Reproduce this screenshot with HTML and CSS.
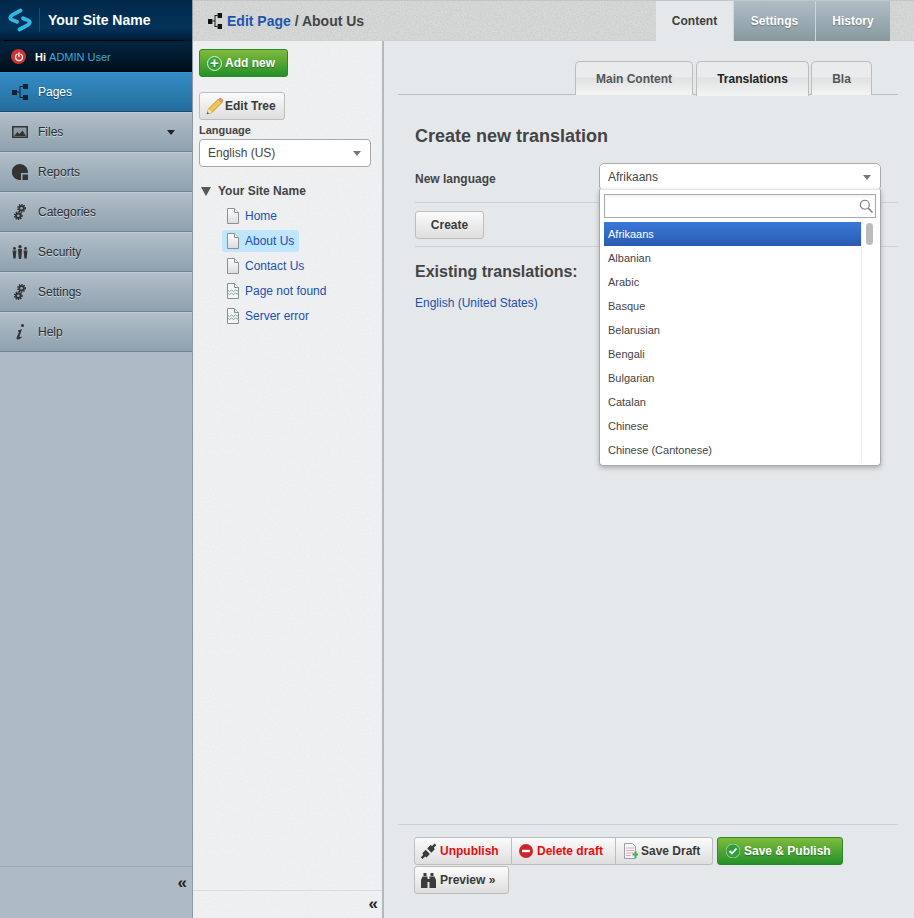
FILE: index.html
```html
<!DOCTYPE html>
<html lang="en">
<head>
<meta charset="utf-8">
<title>Edit Page / About Us</title>
<link rel="stylesheet" href="styles.css">
</head>
<body>
<svg class="defs" width="0" height="0" aria-hidden="true">
  <symbol id="i-tree" viewBox="0 0 16 16"><path d="M0 6h5v5H0zM11 0h5v5h-5zM11 11h5v5h-5z"/><path d="M5 8h3M8 2.500h3M8 13.500h3M8 2v12" fill="none" stroke="currentColor" stroke-width="1"/></symbol>
  <symbol id="i-gears" viewBox="0 0 16 16"><g fill="none" stroke="currentColor"><circle cx="9.500" cy="4.300" r="2.300" stroke-width="2"/><circle cx="9.500" cy="4.300" r="3.700" stroke-width="1.500" stroke-dasharray="1.300 1.100"/><circle cx="6.300" cy="11.700" r="2.300" stroke-width="2"/><circle cx="6.300" cy="11.700" r="3.700" stroke-width="1.500" stroke-dasharray="1.300 1.100"/></g></symbol>
  <symbol id="i-page" viewBox="0 0 14 16"><path d="M1.500.5h7l4 4v11h-11z" fill="url(#g-page)" stroke="#8b9092"/><path d="M8.500.5v4h4" fill="#fff" stroke="#8b9092"/></symbol>
  <symbol id="i-broken" viewBox="0 0 14 16"><path d="M1.500.5h7l4 4v11h-11z" fill="#f4f6f5" stroke="#82908f"/><path d="M8.500.5v4h4" fill="#fff" stroke="#82908f"/><path d="M1.500 7l2 1.500 2-1.500 2 1.500 2-1.500 3 1.500M1.500 10l2 1.500 2-1.500 2 1.500 2-1.500 3 1.500" fill="none" stroke="#8ba3a2"/></symbol>
  <linearGradient id="g-page" x1="0" y1="0" x2="0" y2="1"><stop offset="0" stop-color="#fff"/><stop offset="1" stop-color="#dcdcdc"/></linearGradient>
</svg>

<div class="app">
  <aside class="sidebar">
    <div class="brand">
      <div class="brand-top">
        <svg class="logo" width="24" height="24" viewBox="0 0 24 24" fill="none" stroke="#33b5e5" stroke-width="3.800" stroke-linecap="round" stroke-linejoin="round"><path d="M12.500 2.500 4.500 6.800C1.500 8.800 1.500 10.800 4 11.800c2 .7 3.500 1.200 5 2"/><path d="M11.500 21.500l8-4.300c3-2 3-4 .5-5-2-.7-3.500-1.200-5-2"/></svg>
        <span class="site-name">Your Site Name</span>
      </div>
      <div class="user-row">
        <span class="power"><svg width="10" height="10" viewBox="0 0 10 10" fill="none" stroke="#fff" stroke-width="1.300" stroke-linecap="round"><path d="M3 2.300a3.500 3.500 0 1 0 4 0M5 .8v3.700"/></svg></span>
        <span class="hi">Hi <a class="user" href="#">ADMIN User</a></span>
      </div>
    </div>
    <nav class="nav">
      <a class="nav-item active" href="#"><svg class="nav-icon" width="16" height="16"><use href="#i-tree"/></svg>Pages</a>
      <a class="nav-item" href="#"><svg class="nav-icon" width="16" height="12" viewBox="0 0 16 12"><path d="M0 0h16v12H0z" fill="#333"/><path d="M1.500 1.500h13v9h-13z" fill="#8f9ba3"/><path d="M2 10l3.500-4 2 2 3-3.500L14 10z" fill="#333"/></svg>Files<span class="caret"></span></a>
      <a class="nav-item" href="#"><svg class="nav-icon" width="16" height="16" viewBox="0 0 16 16" fill="#333"><path d="M8 0a8 8 0 1 0 1 15.900V9h6.900A8 8 0 0 0 8 0z"/><path d="M10.500 10.500H16V16h-5.500z"/></svg>Reports</a>
      <a class="nav-item" href="#"><svg class="nav-icon" width="16" height="16"><use href="#i-gears"/></svg>Categories</a>
      <a class="nav-item" href="#"><svg class="nav-icon" width="16" height="14" viewBox="0 0 16 14" fill="#333"><circle cx="2.500" cy="3.500" r="1.400"/><circle cx="8" cy="1.800" r="1.700"/><circle cx="13.500" cy="3.500" r="1.400"/><path d="M.5 5.500h4L4 10l-.4 3.500H1.400L1 10zM6 4h4l-.4 6.500-.5 3.500H6.900l-.5-3.500zM11.500 5.500h4L15 10l-.4 3.500h-2.200L12 10z"/></svg>Security</a>
      <a class="nav-item" href="#"><svg class="nav-icon" width="16" height="16"><use href="#i-gears"/></svg>Settings</a>
      <a class="nav-item" href="#"><svg class="nav-icon" width="16" height="16" viewBox="0 0 16 16" fill="#333"><circle cx="10.500" cy="1.500" r="1.500"/><path d="M6 6.500 10 5l-2.500 7.500c0 1 .8.800 2 0l.3.800c-1.600 1.600-3 2.200-4 2.200-1.300 0-1.500-1-1.100-2.200L7 8l-1-.5z"/></svg>Help</a>
    </nav>
    <div class="side-foot"><span class="collapse">«</span></div>
  </aside>

  <div class="workspace">
    <header class="topbar">
      <svg class="crumb-icon" width="14" height="16" viewBox="0 0 16 16" preserveAspectRatio="none"><use href="#i-tree"/></svg>
      <h1 class="crumb"><a href="#">Edit Page</a> / About Us</h1>
      <div class="top-tabs">
        <a class="top-tab current" href="#">Content</a>
        <a class="top-tab t-settings" href="#">Settings</a>
        <a class="top-tab t-history" href="#">History</a>
      </div>
    </header>

    <div class="panes">
      <section class="tree-pane">
        <div class="tree-scroll">
          <a class="btn btn-green btn-add" href="#"><span class="plus">+</span>Add new</a>
          <a class="btn btn-edit" href="#"><svg width="18" height="18" viewBox="0 0 18 18"><path d="M1 17l1.500-5L12.500 2l3.500 3.500-10 10z" fill="#f3c74f" stroke="#a8852c" stroke-width=".8"/><path d="M12.500 2l1-1c.6-.5 1.200-.5 1.700 0l1.800 1.800c.5.500.5 1.100 0 1.700l-1 1z" fill="#e58b7e"/><path d="M1 17l1.500-5 3.500 3.500z" fill="#f4e0bd"/><path d="M1 17l.6-2 1.400 1.400z" fill="#333"/></svg>Edit Tree</a>
          <label class="lang-label">Language</label>
          <div class="select lang-select"><span>English (US)</span><i class="tri"></i></div>
          <ul class="tree">
            <li class="tree-root"><i class="root-tri"></i>Your Site Name</li>
            <li class="tree-leaf"><a href="#"><svg width="14" height="16"><use href="#i-page"/></svg>Home</a></li>
            <li class="tree-leaf"><a class="selected" href="#"><svg width="14" height="16"><use href="#i-page"/></svg>About Us</a></li>
            <li class="tree-leaf"><a href="#"><svg width="14" height="16"><use href="#i-page"/></svg>Contact Us</a></li>
            <li class="tree-leaf"><a href="#"><svg width="14" height="16"><use href="#i-broken"/></svg>Page not found</a></li>
            <li class="tree-leaf"><a href="#"><svg width="14" height="16"><use href="#i-broken"/></svg>Server error</a></li>
          </ul>
        </div>
        <div class="tree-foot"><span class="collapse">«</span></div>
      </section>

      <main class="main">
        <div class="sub-tabs">
          <a class="sub-tab t-main" href="#">Main Content</a>
          <a class="sub-tab active t-trans" href="#">Translations</a>
          <a class="sub-tab t-bla" href="#">Bla</a>
        </div>
        <div class="form">
          <h2 class="h-create">Create new translation</h2>
          <div class="field">
            <label class="field-label">New language</label>
            <div class="combo">
              <div class="select combo-select"><span>Afrikaans</span><i class="tri"></i></div>
              <div class="drop">
                <div class="drop-search"><svg width="14" height="14" viewBox="0 0 14 14" fill="none" stroke="#777" stroke-width="1.100"><circle cx="5.800" cy="5.800" r="4.500"/><path d="M9 9l4.500 4.500" stroke-width="1.400"/></svg></div>
                <div class="drop-body">
                  <ul class="drop-list">
                    <li class="on">Afrikaans</li>
                    <li>Albanian</li>
                    <li>Arabic</li>
                    <li>Basque</li>
                    <li>Belarusian</li>
                    <li>Bengali</li>
                    <li>Bulgarian</li>
                    <li>Catalan</li>
                    <li>Chinese</li>
                    <li>Chinese (Cantonese)</li>
                  </ul>
                  <div class="drop-scroll"><i></i></div>
                </div>
              </div>
            </div>
          </div>
          <div class="create-row"><a class="btn btn-create" href="#">Create</a></div>
          <h3 class="h-existing">Existing translations:</h3>
          <a class="existing-link" href="#">English (United States)</a>
        </div>
        <div class="actions">
          <div class="group">
            <a class="btn seg red" href="#"><svg width="17" height="16" viewBox="0 0 17 16" fill="#3a3a3a"><path d="M.8 14.200l2.500-2.500-1-1.500 3.400-3.400 4.200 4.200-3.400 3.400-1.500-1-2.500 2.500z"/><path d="M7.200 5.500 10.600 2l1.500 1L14.600.5l1.700 1.700-2.500 2.500 1 1.500-3.400 3.500z"/></svg>Unpublish</a>
            <a class="btn seg red" href="#"><svg width="14" height="14" viewBox="0 0 14 14"><circle cx="7" cy="7" r="7" fill="#c8262b"/><path d="M3 5.800h8v2.400H3z" fill="#fff"/></svg>Delete draft</a>
            <a class="btn seg" href="#"><svg width="14" height="16" viewBox="0 0 14 16"><path d="M.5.500h8l3 3v12H.5z" fill="#f7f7fb" stroke="#9aa0a8"/><path d="M2 5h8M2 7.500h8M2 10h8M2 12.500h5" stroke="#e4a9b4"/><path d="M8.500 10.500h2v-2h2v2h2v2h-2v2.500h-2V12.500h-2z" fill="#3bb54a"/></svg>Save Draft</a>
          </div>
          <a class="btn btn-green btn-pub" href="#"><svg width="14" height="14" viewBox="0 0 14 14"><circle cx="7" cy="7" r="7" fill="#2f9e3c" stroke="#e3f2dd" stroke-width=".6"/><path d="M3.500 7l2.500 2.500 4.500-5" fill="none" stroke="#fff" stroke-width="1.800"/></svg>Save &amp; Publish</a>
          <a class="btn btn-preview" href="#"><svg width="15" height="15" viewBox="0 0 15 15" fill="#3a3a3a"><path d="M2.500 0h3v3h-3zM9.500 0h3v3h-3zM1.500 3.500h5v3H6.500v8.500H0V7zM8.500 3.500h5L15 7v8H8.500V6.500zM6.500 6h2v3h-2z"/></svg>Preview »</a>
        </div>
      </main>
    </div>
  </div>
</div>
</body>
</html>
```

FILE: styles.css
```css
* { box-sizing: border-box; }
html, body { height: 100%; }
body {
  margin: 0;
  overflow: hidden;
  font: 12px/16px "Liberation Sans", Arial, sans-serif;
  color: #333;
  background: #e5e8eb;
}
a { text-decoration: none; color: inherit; }
ul { list-style: none; margin: 0; padding: 0; }
h1, h2, h3 { margin: 0; }
.defs { position: absolute; }
svg { display: block; flex: none; }

.app { display: flex; height: 918px; }

/* sidebar */
.sidebar {
  width: 193px;
  flex: none;
  display: flex;
  flex-direction: column;
  background: #aebbc4;
  border-right: 1px solid #8e989e;
}
.brand {
  height: 72px;
  background: linear-gradient(#00284a 0, #03335a 28px, #001a32 41px, #04243f 42px, #000d1a 72px);
}
.brand-top {
  height: 41px;
  margin: 0 8px 0 4px;
  display: flex;
  align-items: center;
  border-bottom: 1px solid #000;
}
.logo { margin: 0 0 0 4px; }
.site-name {
  margin-left: 7px;
  padding-left: 8px;
  border-left: 1px solid #234a6c;
  font-size: 14px;
  font-weight: bold;
  line-height: 24px;
  color: #fff;
}
.user-row { height: 31px; display: flex; align-items: center; padding-left: 11px; }
.power {
  width: 15px; height: 15px; border-radius: 50%;
  background: #d0322f;
  display: flex; align-items: center; justify-content: center;
}
.hi { margin-left: 9px; font-size: 11px; color: #fff; font-weight: bold; }
.user { color: #35abdd; font-weight: normal; }

.nav { display: flex; flex-direction: column; }
.nav-item {
  height: 40px;
  display: flex;
  align-items: center;
  padding-left: 12px;
  color: #2b2f33;
  text-shadow: 0 1px 0 rgba(255,255,255,.5);
  background: linear-gradient(#b1bfc9, #8fa1ae);
  border-bottom: 1px solid #6f8290;
  border-top: 1px solid #c0ccd4;
}
.nav-item.active {
  background: linear-gradient(#338dc5, #246d9d);
  border-color: #3a94cc #123f5e #164a6e;
  color: #fff;
  text-shadow: 0 1px 1px rgba(0,0,0,.4);
}
.nav-icon { margin-right: 10px; fill: #333; color: #333; width: 16px; }
.nav-item.active .nav-icon { fill: #14232f; color: #14232f; }
.caret {
  margin-left: auto;
  margin-right: 17px;
  border: 4px solid transparent;
  border-top: 5px solid #222;
  border-bottom: 0;
}
.side-foot {
  margin-top: auto;
  height: 52px;
  border-top: 1px solid #9fabb3;
  display: flex;
  justify-content: flex-end;
  padding: 6px 5px 0 0;
}
.collapse { font-size: 17px; line-height: 20px; color: #222; font-weight: bold; }

/* workspace */
.workspace { flex: 1; min-width: 0; display: flex; flex-direction: column; }
.topbar {
  height: 41px;
  flex: none;
  display: flex;
  align-items: center;
  padding-left: 15px;
  background: #d8dada url("data:image/svg+xml,%3Csvg xmlns='http://www.w3.org/2000/svg' width='200' height='200'%3E%3Cfilter id='n'%3E%3CfeTurbulence type='fractalNoise' baseFrequency='.7' numOctaves='2'/%3E%3CfeColorMatrix values='0 0 0 0 0 0 0 0 0 0 0 0 0 0 0 0 0 0 .35 -.1'/%3E%3C/filter%3E%3Crect width='200' height='200' filter='url(%23n)' opacity='.3'/%3E%3C/svg%3E");
  border-top: 1px solid #c4c6c6;
  border-bottom: 1px solid #cfd2d3;
}
.crumb-icon { fill: #111; color: #111; }
.crumb { margin-left: 5px; font-size: 14px; line-height: 20px; font-weight: bold; color: #444; }
.crumb a { color: #1e56ad; }
.top-tabs { margin-left: auto; margin-right: 24px; display: flex; align-self: stretch; margin-bottom: -1px; }
.top-tab {
  width: 77px;
  display: flex;
  align-items: center;
  justify-content: center;
  font-weight: bold;
  color: #fff;
  text-shadow: 0 1px 1px rgba(0,0,0,.3);
  background: linear-gradient(#afbdc7, #87999f);
  margin-left: 1px;
}
.top-tab.current { background: #e5e8eb; color: #3d3d3d; text-shadow: none; margin-left: 0; }
.top-tab.t-settings { width: 81px; }
.top-tab.t-history { width: 74px; }

.panes { flex: 1; min-height: 0; display: flex; }

/* tree */
.tree-pane {
  width: 191px;
  flex: none;
  display: flex;
  flex-direction: column;
  background: #eff1f2 url("data:image/svg+xml,%3Csvg xmlns='http://www.w3.org/2000/svg' width='200' height='200'%3E%3Cfilter id='n'%3E%3CfeTurbulence type='fractalNoise' baseFrequency='.7' numOctaves='2'/%3E%3CfeColorMatrix values='0 0 0 0 0 0 0 0 0 0 0 0 0 0 0 0 0 0 .3 -.1'/%3E%3C/filter%3E%3Crect width='200' height='200' filter='url(%23n)' opacity='.12'/%3E%3C/svg%3E");
  border-right: 2px solid #b3b8bb;
}
.tree-scroll { flex: 1; padding: 8px 0 0 6px; }
.btn {
  display: inline-flex;
  align-items: center;
  height: 28px;
  border-radius: 3px;
  font-weight: bold;
  white-space: nowrap;
  color: #3a3a3a;
  border: 1px solid #bdbdbd;
  background: linear-gradient(#fbfbfb, #dedede);
}
.btn-green {
  color: #fff;
  border: 1px solid #2a8a2a;
  background: linear-gradient(#7fbb3c, #259029);
  text-shadow: 0 1px 1px rgba(0,0,0,.3);
}
.btn-add { display: flex; width: 89px; padding-left: 7px; }
.plus {
  width: 15px; height: 15px; margin-right: 3px;
  border-radius: 50%;
  border: 1px solid #dff0d8;
  background: #3aa63c;
  color: #fff;
  font-size: 15px;
  line-height: 12px;
  text-align: center;
  font-weight: bold;
}
.btn-edit { display: flex; width: 86px; margin-top: 15px; padding-left: 6px; gap: 1px; }
.lang-label { display: block; margin-top: 2px; font-size: 11px; line-height: 16px; font-weight: bold; color: #444; }
.select {
  height: 28px;
  display: flex;
  align-items: center;
  justify-content: space-between;
  padding: 0 9px 0 8px;
  background: #fff;
  border: 1px solid #a9a9a9;
  border-radius: 4px;
  color: #444;
}
.lang-select { width: 172px; margin-top: 1px; }
.tri { border: 4px solid transparent; border-top: 5px solid #777; border-bottom: 0; }
.tree { margin-top: 14px; padding-left: 2px; }
.tree-root { height: 20px; display: flex; align-items: center; font-weight: bold; color: #444; }
.root-tri { margin-right: 7px; border: 5px solid transparent; border-top: 9px solid #555; border-bottom: 0; width: 0; }
.tree-leaf { height: 25px; display: flex; align-items: center; padding-left: 21px; }
.tree-root + .tree-leaf { margin-top: 2px; }
.tree-leaf a {
  display: flex; align-items: center; gap: 5px;
  height: 22px; padding: 0 5px 0 4px;
  color: #1b4fb0;
  border-radius: 3px;
}
.tree-leaf a.selected { background: #bfe6fd; }
.tree-foot {
  height: 28px;
  flex: none;
  border-top: 1px solid #d8dcde;
  display: flex;
  justify-content: flex-end;
  padding: 3px 4px 0 0;
}

/* main */
.main { flex: 1; min-width: 0; display: flex; flex-direction: column; padding: 0 16px 0 14px; }
.sub-tabs {
  margin-top: 20px;
  height: 34px;
  flex: none;
  display: flex;
  align-items: flex-end;
  padding-left: 177px;
  border-bottom: 1px solid #b9bec1;
}
.sub-tab {
  height: 34px;
  margin-bottom: -1px;
  display: flex;
  align-items: center;
  justify-content: center;
  font-weight: bold;
  color: #555;
  border: 1px solid #bcbcbc;
  border-bottom: 0;
  border-radius: 5px 5px 0 0;
  background: linear-gradient(#e9ebec 0, #e9ebec 15px, #dfe1e2 16px, #f4f4f4 100%);
}
.sub-tab.t-main { width: 118px; margin-right: 3px; }
.sub-tab.t-trans { width: 113px; margin-right: 2px; }
.sub-tab.t-bla { width: 61px; }
.sub-tab.active { color: #222; height: 35px; margin-bottom: -2px; }
.form { padding: 0 0 0 17px; flex: 1; min-height: 0; }
.h-create { margin-top: 31px; font-size: 18px; line-height: 20px; color: #444; }
.field {
  margin-top: 17px;
  height: 40px;
  display: flex;
  border-bottom: 1px solid #ced2d5;
}
.field-label { width: 184px; flex: none; padding-top: 8px; font-weight: bold; color: #444; }
.combo { width: 282px; flex: none; position: relative; }
.combo-select { height: 28px; border-radius: 5px; }
.drop {
  position: absolute;
  left: 0; right: 0; top: 26px;
  z-index: 2;
  height: 277px;
  padding: 4px 4px 0;
  background: #fff;
  border: 1px solid #a9a9a9;
  border-top-color: #e4e4e4;
  border-radius: 0 0 4px 4px;
  box-shadow: 0 2px 5px rgba(0,0,0,.25);
}
.drop-search {
  height: 24px;
  border: 1px solid #a9a9a9;
  display: flex;
  align-items: center;
  justify-content: flex-end;
  padding-right: 2px;
  box-shadow: inset 0 2px 3px rgba(0,0,0,.06);
}
.drop-body { margin-top: 4px; display: flex; height: 240px; overflow: hidden; }
.drop-list { width: 257px; flex: none; font-size: 11px; color: #444; }
.drop-list li { height: 24px; padding-left: 4px; line-height: 24px; }
.drop-list li.on { color: #fff; background: linear-gradient(#3a78d8, #2a5bb0); }
.drop-scroll { flex: 1; padding: 1px 3px 0 4px; border-left: 1px solid #ededed; }
.drop-scroll i { display: block; height: 22px; background: #bcbcbc; border-radius: 4px; }
.create-row { height: 44px; padding-top: 8px; border-bottom: 1px solid #ced2d5; }
.btn-create { width: 69px; justify-content: center; }
.h-existing { margin-top: 15px; font-size: 16px; line-height: 20px; color: #444; }
.existing-link { display: block; margin-top: 13px; color: #1b4fb0; }
.actions {
  flex: none;
  height: 94px;
  border-top: 1px solid #cfd2d5;
  padding: 12px 0 0 16px;
  display: flex;
  flex-wrap: wrap;
  align-content: flex-start;
  column-gap: 4px;
  row-gap: 1px;
}
.group { display: flex; }
.seg { border-radius: 0; border-left: 0; gap: 4px; }
.seg:first-child { border-left: 1px solid #bdbdbd; border-radius: 3px 0 0 3px; width: 98px; padding-left: 5px; gap: 3px; }
.seg:nth-child(2) { width: 104px; padding-left: 7px; gap: 4px; }
.seg:last-child { border-radius: 0 3px 3px 0; width: 97px; padding-left: 8px; gap: 3px; }
.seg.red { color: #e60d0d; }
.btn-pub { width: 126px; padding-left: 8px; gap: 4px; }
.btn-preview { width: 95px; padding-left: 6px; gap: 4px; }
```
